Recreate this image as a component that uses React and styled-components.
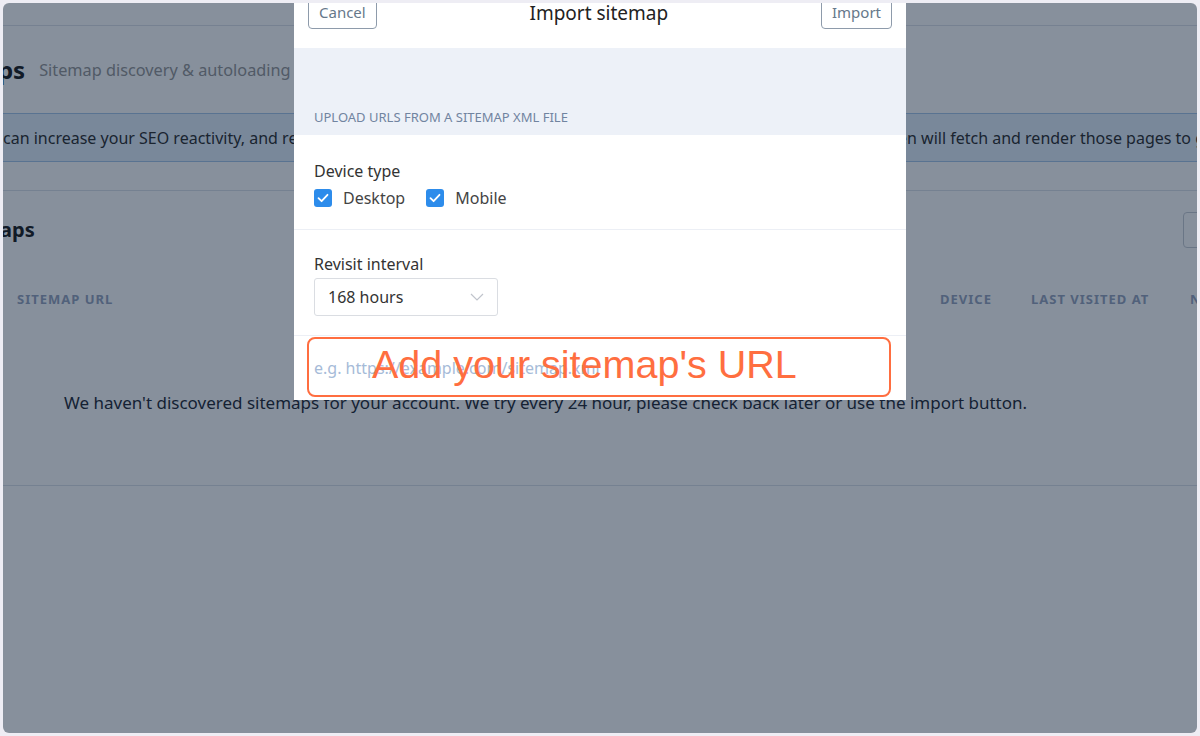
import React from 'react';
import styled, { createGlobalStyle } from 'styled-components';

const GlobalStyle = createGlobalStyle`
  html, body {
    margin: 0;
    padding: 0;
    background: #eeedf4;
  }
  body {
    font-family: "Noto Sans", "Open Sans", sans-serif;
  }
  * {
    box-sizing: border-box;
  }
`;

const Frame = styled.div`
  position: relative;
  margin: 3px;
  height: 730px;
  border-radius: 6px;
  overflow: hidden;
  background: #ffffff;
`;

// the page is scrolled sideways, so it starts left of the frame
const Page = styled.div`
  width: 1500px;
  margin-left: -100px;
  color: #333;
`;

const TopBar = styled.div`
  height: 23px;
  border-bottom: 1px solid #dfe3ea;
`;

const Header = styled.header`
  height: 87px;
  display: flex;
  align-items: center;
  gap: 14px;
  padding-left: 12px;
`;

const PageTitle = styled.h1`
  margin: 0;
  font-size: 24px;
  font-weight: 700;
  color: #222;
`;

const PageSubtitle = styled.span`
  font-size: 16.3px;
  color: #999;
`;

const InfoBar = styled.div`
  height: 49px;
  border-top: 1px solid #a9c9ea;
  border-bottom: 1px solid #a9c9ea;
  background: #e5f0fb;
  padding-left: 100px;
  font-size: 16px;
  line-height: 48px;
  white-space: nowrap;
`;

const Card = styled.section`
  margin-top: 28px;
  border-top: 1px solid #dde3ea;
  border-bottom: 1px solid #dde3ea;
`;

const CardHeader = styled.div`
  height: 77px;
  display: flex;
  align-items: center;
  padding-left: 40px;
`;

const CardTitle = styled.h2`
  margin: 0;
  font-size: 20px;
  font-weight: 700;
  color: #222;
`;

const GhostButton = styled.button`
  margin-left: auto;
  margin-right: 100px;
  width: 120px;
  height: 36px;
  border: 1px solid #c9ced6;
  border-radius: 4px;
  background: #fff;
`;

const TableHead = styled.div`
  height: 62px;
  display: grid;
  grid-template-columns: 114px 923px 91px 159px 1fr;
  align-items: center;
  padding-bottom: 1px;
  font-size: 13px;
  font-weight: 700;
  letter-spacing: 1px;
  text-transform: uppercase;
  color: #9aa7c0;
  white-space: nowrap;
`;

const EmptyRow = styled.div`
  height: 155px;
  padding: 61px 0 0 161px;
  font-size: 17px;
  color: #2a2f3a;
  white-space: nowrap;
`;

const Overlay = styled.div`
  position: absolute;
  inset: 0;
  background: rgba(0, 20, 45, 0.47);
`;

const Modal = styled.div`
  position: absolute;
  top: -17px;
  left: 291px;
  width: 612px;
  background: #fff;
  color: #333;
`;

const ModalHeader = styled.div`
  height: 62px;
  padding: 8px 14px 0 14px;
  display: flex;
  justify-content: space-between;
  align-items: flex-start;
`;

const ModalTitle = styled.h3`
  margin: 2px 0 0;
  font-size: 19px;
  font-weight: 400;
  line-height: 34px;
  color: #222;
`;

const OutlineButton = styled.button`
  height: 35px;
  padding: 1px 10px 0;
  border: 1px solid #8e9bab;
  border-radius: 4px;
  background: #fff;
  font-family: inherit;
  font-size: 15px;
  color: #66788a;
`;

const UploadSection = styled.div`
  height: 87px;
  background: #edf1f8;
  display: flex;
  align-items: flex-end;
  padding: 0 20px 10px;
  font-size: 13px;
  line-height: 16px;
  text-transform: uppercase;
  color: #7184a0;
`;

const FieldSection = styled.div`
  padding: ${(p) => p.$top}px 20px ${(p) => p.$bottom}px;
  border-bottom: 1px solid #eceff5;
`;

const FieldLabel = styled.div`
  font-size: 16px;
  line-height: 22px;
  margin-bottom: ${(p) => p.$gap}px;
`;

const CheckRow = styled.div`
  display: flex;
  align-items: center;
  gap: 21px;
  height: 22px;
`;

const CheckOption = styled.label`
  display: flex;
  align-items: center;
  gap: 11px;
  font-size: 16px;
  color: #444;
`;

const CheckBox = styled.span`
  width: 18px;
  height: 18px;
  border-radius: 3px;
  background: #2d8ceb;
  display: flex;
  align-items: center;
  justify-content: center;
`;

const Select = styled.div`
  width: 184px;
  height: 38px;
  border: 1px solid #dadde2;
  border-radius: 3px;
  display: flex;
  align-items: center;
  justify-content: space-between;
  padding: 0 13px 0 13px;
  font-size: 16px;
  color: #333;
`;

const InputSection = styled.div`
  height: 64px;
  display: flex;
  align-items: center;
  padding: 0 20px;
`;

const UrlInput = styled.input`
  width: 100%;
  border: none;
  outline: none;
  padding: 0;
  font-family: inherit;
  font-size: 16px;
  color: #333;
  &::placeholder {
    color: #a6bbd8;
  }
`;

const Callout = styled.div`
  position: absolute;
  left: 13px;
  top: 351px;
  width: 584px;
  height: 60px;
  border: 2.5px solid #ff6e40;
  border-radius: 8px;
  display: flex;
  align-items: center;
  padding: 0 0 5px 63px;
  font-family: "Liberation Sans", Arial, sans-serif;
  font-size: 39.5px;
  color: #ff6e40;
  pointer-events: none;
`;

const Check = () => (
  <svg width="12" height="10" viewBox="0 0 12 10">
    <path d="M1.5 5.2 L4.6 8.2 L10.5 1.8" fill="none" stroke="#fff" strokeWidth="1.8" strokeLinecap="round" strokeLinejoin="round" />
  </svg>
);

const Chevron = () => (
  <svg width="14" height="8" viewBox="0 0 14 8">
    <path d="M1 1 L7 7 L13 1" fill="none" stroke="#c0c4cc" strokeWidth="1.2" />
  </svg>
);

const App = () => (
  <>
    <GlobalStyle />
    <Frame>
      <Page>
        <TopBar />
        <Header>
          <PageTitle>Sitemaps</PageTitle>
          <PageSubtitle>Sitemap discovery &amp; autoloading</PageSubtitle>
        </Header>
        <InfoBar>
          can increase your SEO reactivity, and reduce the time it takes Google to index your latest content, because Prerender then will fetch and render those pages to get them cached.
        </InfoBar>
        <Card>
          <CardHeader>
            <CardTitle>Sitemaps</CardTitle>
            <GhostButton />
          </CardHeader>
          <TableHead>
            <span />
            <span>Sitemap URL</span>
            <span>Device</span>
            <span>Last visited at</span>
            <span>Next visit at</span>
          </TableHead>
          <EmptyRow>
            We haven't discovered sitemaps for your account. We try every 24 hour, please check back later or use the import button.
          </EmptyRow>
        </Card>
      </Page>

      <Overlay />

      <Modal>
        <ModalHeader>
          <OutlineButton>Cancel</OutlineButton>
          <ModalTitle>Import sitemap</ModalTitle>
          <OutlineButton>Import</OutlineButton>
        </ModalHeader>
        <UploadSection>Upload URLs from a sitemap XML file</UploadSection>
        <FieldSection $top={25} $bottom={20}>
          <FieldLabel $gap={5}>Device type</FieldLabel>
          <CheckRow>
            <CheckOption>
              <CheckBox><Check /></CheckBox>
              Desktop
            </CheckOption>
            <CheckOption>
              <CheckBox><Check /></CheckBox>
              Mobile
            </CheckOption>
          </CheckRow>
        </FieldSection>
        <FieldSection $top={23} $bottom={19}>
          <FieldLabel $gap={3}>Revisit interval</FieldLabel>
          <Select>
            168 hours
            <Chevron />
          </Select>
        </FieldSection>
        <InputSection>
          <UrlInput placeholder="e.g. https://example.com/sitemap.xml" />
        </InputSection>
        <Callout>Add your sitemap's URL</Callout>
      </Modal>
    </Frame>
  </>
);

export default App;
